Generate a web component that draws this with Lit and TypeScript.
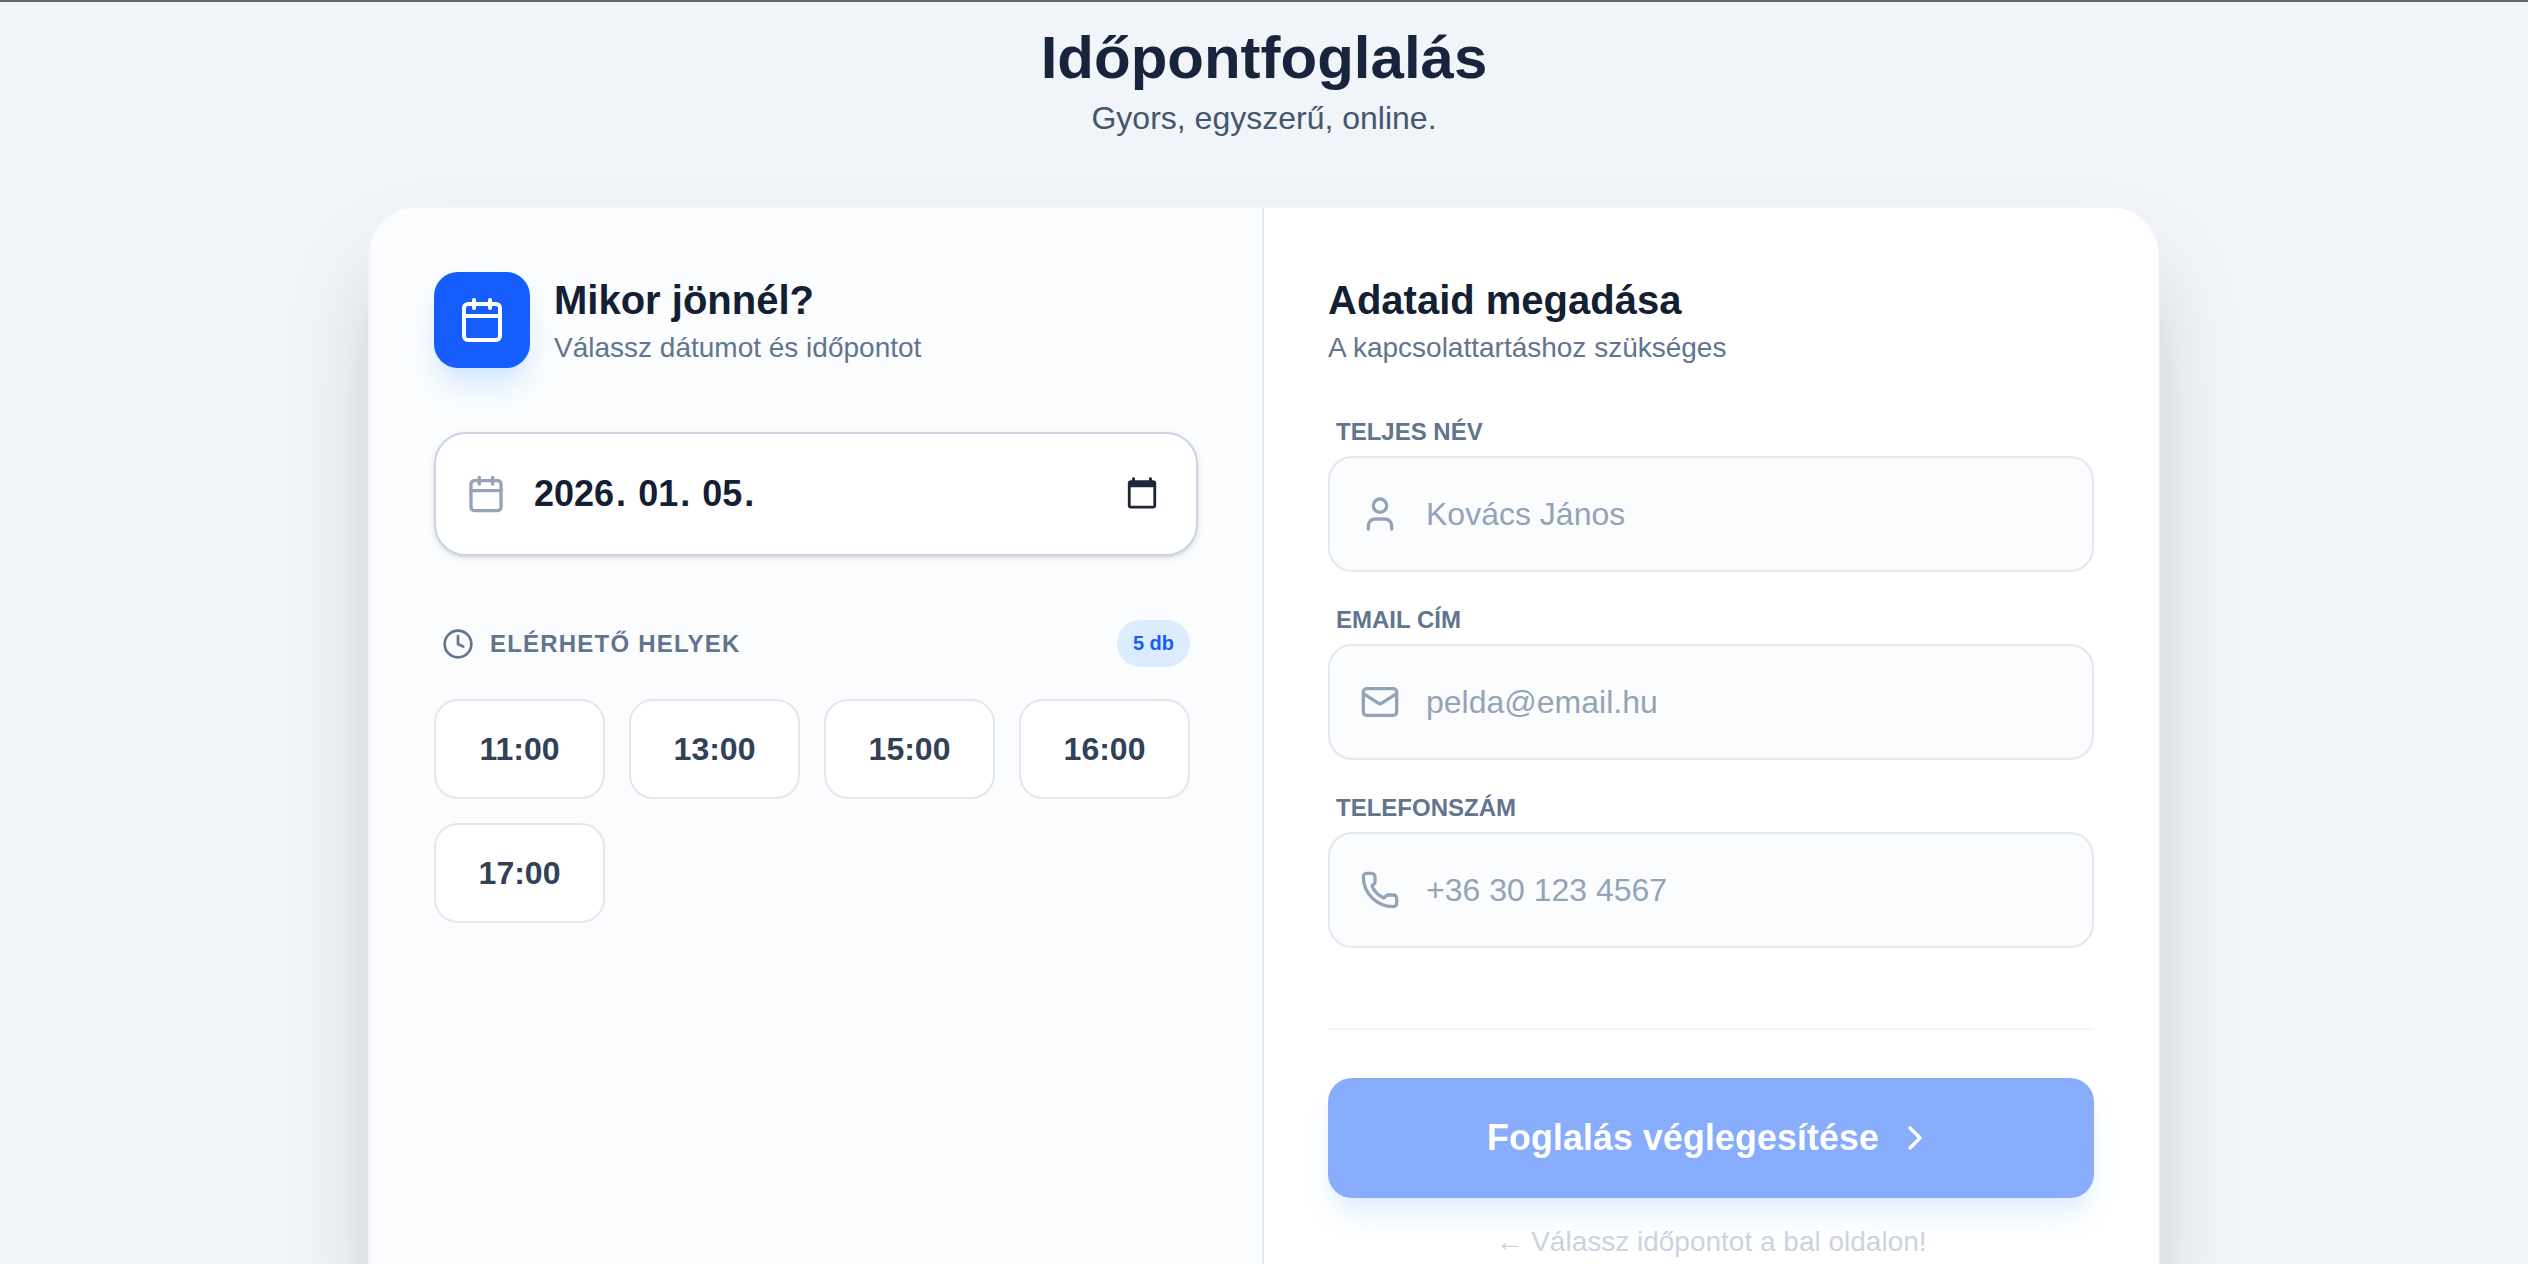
import { LitElement, html, css, svg } from "lit";
import { customElement, property, state } from "lit/decorators.js";

const ICONS: Record<string, unknown> = {
  calendar: svg`<path d="M8 2v4"/><path d="M16 2v4"/><rect width="18" height="18" x="3" y="4" rx="2"/><path d="M3 10h18"/>`,
  clock: svg`<circle cx="12" cy="12" r="10"/><path d="M12 6v6l4 2"/>`,
  user: svg`<path d="M19 21v-2a4 4 0 0 0-4-4H9a4 4 0 0 0-4 4v2"/><circle cx="12" cy="7" r="4"/>`,
  mail: svg`<path d="m22 7-8.991 5.727a2 2 0 0 1-2.009 0L2 7"/><rect x="2" y="4" width="20" height="16" rx="2"/>`,
  phone: svg`<path d="M13.832 16.568a1 1 0 0 0 1.213-.303l.355-.465A2 2 0 0 1 17 15h3a2 2 0 0 1 2 2v3a2 2 0 0 1-2 2A18 18 0 0 1 2 4a2 2 0 0 1 2-2h3a2 2 0 0 1 2 2v3a2 2 0 0 1-.8 1.6l-.468.351a1 1 0 0 0-.292 1.233 14 14 0 0 0 6.392 6.384"/>`,
  chevron: svg`<path d="m9 18 6-6-6-6"/>`,
};

@customElement("ui-icon")
export class UiIcon extends LitElement {
  @property() name = "calendar";

  static styles = css`
    :host {
      display: block;
      flex: none;
      width: 40px;
      height: 40px;
    }
    .icon {
      display: block;
      width: 100%;
      height: 100%;
      fill: none;
      stroke: currentColor;
      stroke-width: 2;
      stroke-linecap: round;
      stroke-linejoin: round;
    }
  `;

  render() {
    return html`<svg class="icon" viewBox="0 0 24 24" aria-hidden="true">${ICONS[this.name]}</svg>`;
  }
}

interface Field {
  id: string;
  label: string;
  icon: string;
  type: string;
  placeholder: string;
}

const FIELDS: Field[] = [
  { id: "name", label: "Teljes név", icon: "user", type: "text", placeholder: "Kovács János" },
  { id: "email", label: "Email cím", icon: "mail", type: "email", placeholder: "pelda@email.hu" },
  { id: "phone", label: "Telefonszám", icon: "phone", type: "tel", placeholder: "+36 30 123 4567" },
];

@customElement("app-root")
export class AppRoot extends LitElement {
  @state() private date = "2026-01-05";
  @state() private selected = "";
  private slots = ["11:00", "13:00", "15:00", "16:00", "17:00"];

  static styles = css`
    :host {
      display: block;
      box-sizing: border-box;
      min-height: 100vh;
      border-top: 2px solid #666666;
      background: #f1f5f9;
      color: #141f33;
      font-family: "Liberation Sans", Arial, sans-serif;
      font-size: 32px;
      line-height: 48px;
    }
    *,
    *::before {
      box-sizing: border-box;
    }
    h1,
    h2,
    p {
      margin: 0;
    }
    button,
    input {
      font: inherit;
      color: inherit;
    }
    .page {
      display: flex;
      flex-direction: column;
      align-items: center;
      gap: 64px;
      padding: 20px 32px 96px;
    }
    .masthead {
      text-align: center;
    }
    .page-title {
      color: #18243b;
      font-size: 60px;
      line-height: 72px;
    }
    .tagline {
      color: #45556c;
    }
    .card {
      display: grid;
      grid-template-columns: 1fr 1fr;
      width: 100%;
      max-width: 1792px;
      overflow: hidden;
      border: 2px solid #f1f5f9;
      border-radius: 48px;
      background: #ffffff;
      box-shadow: 0 50px 100px -24px rgb(0 0 0 / 0.25);
    }
    .panel {
      padding: 64px;
    }
    .when {
      border-right: 2px solid #e2e8f0;
      background: #fafcfe;
    }
    .head {
      display: flex;
      align-items: center;
      gap: 24px;
    }
    .tile {
      display: grid;
      place-items: center;
      width: 96px;
      height: 96px;
      border-radius: 24px;
      background: #155dfc;
      color: #ffffff;
      box-shadow: 0 20px 30px -6px #cfe5ff, 0 8px 12px -8px #cfe5ff;
    }
    .tile ui-icon {
      width: 48px;
      height: 48px;
    }
    .title {
      font-size: 40px;
      line-height: 56px;
    }
    .sub {
      color: #62748e;
      font-size: 28px;
      line-height: 40px;
    }
    .date {
      display: flex;
      align-items: center;
      margin-top: 64px;
      padding: 32px 34px 32px 30px;
      border: 2px solid #cad5e2;
      border-radius: 32px;
      background: #ffffff;
      font-size: 36px;
      font-weight: 700;
      line-height: 56px;
      box-shadow: 0 2px 6px rgb(0 0 0 / 0.1), 0 2px 4px -2px rgb(0 0 0 / 0.1);
    }
    .date ui-icon,
    .control ui-icon {
      color: #94a3b8;
    }
    .date-text {
      padding-left: 26px;
      white-space: pre;
    }
    .part {
      padding: 0 2px;
    }
    .date-input {
      flex: 1;
      min-width: 0;
      height: 56px;
      padding: 0;
      border: 0;
      outline: 0;
      background: none;
    }
    .date-input::-webkit-datetime-edit {
      visibility: hidden;
    }
    .date-input::-webkit-calendar-picker-indicator {
      filter: invert(12%) sepia(100%) hue-rotate(180deg) saturate(200%);
    }
    .slots-head {
      display: flex;
      align-items: center;
      gap: 16px;
      margin-top: 64px;
      padding: 0 8px;
      color: #62748e;
    }
    .slots-head ui-icon {
      width: 32px;
      height: 32px;
    }
    .slots-title {
      flex: 1;
      font-size: 24px;
      line-height: 32px;
      letter-spacing: 0.05em;
      text-transform: uppercase;
    }
    .badge {
      padding: 8px 16px;
      border-radius: 24px;
      background: #dbecfe;
      color: #155dfc;
      font-size: 20px;
      font-weight: 700;
      line-height: 31px;
    }
    .slots {
      display: grid;
      grid-template-columns: repeat(4, 1fr);
      gap: 24px;
      margin-top: 32px;
      padding-right: 8px;
    }
    .slot {
      padding: 24px 0;
      border: 2px solid #e2e8ee;
      border-radius: 24px;
      background: #ffffff;
      color: #314158;
      font-weight: 700;
      line-height: 48px;
      cursor: pointer;
    }
    .slot[aria-pressed="true"] {
      border-color: #155dfc;
      background: #155dfc;
      color: #ffffff;
    }
    .fields {
      display: flex;
      flex-direction: column;
      gap: 32px;
      margin-top: 48px;
    }
    .field {
      display: flex;
      flex-direction: column;
      gap: 8px;
    }
    .label {
      padding-left: 8px;
      color: #62748e;
      font-size: 24px;
      font-weight: 700;
      line-height: 32px;
      text-transform: uppercase;
    }
    .control {
      display: flex;
      align-items: center;
      gap: 26px;
      padding: 32px 30px;
      border: 2px solid #e2e8ee;
      border-radius: 24px;
      background: #fbfcfe;
    }
    .control:focus-within,
    .date:focus-within {
      border-color: #155dfc;
    }
    .input {
      flex: 1;
      min-width: 0;
      height: 48px;
      padding: 0;
      border: 0;
      outline: 0;
      background: none;
    }
    .input::placeholder {
      color: #94a3b8;
      opacity: 1;
    }
    .finish {
      margin-top: 80px;
      padding-top: 48px;
      border-top: 2px solid #f1f5f9;
    }
    .submit {
      display: flex;
      align-items: center;
      justify-content: center;
      gap: 16px;
      width: 100%;
      padding: 32px;
      border: 0;
      border-radius: 24px;
      background: #155dfc;
      color: #ffffff;
      font-size: 36px;
      font-weight: 700;
      line-height: 56px;
      box-shadow: 0 20px 30px -6px #bedbff, 0 8px 12px -8px #bedbff;
      cursor: pointer;
    }
    .submit:disabled {
      opacity: 0.5;
      cursor: not-allowed;
    }
    .hint {
      margin-top: 24px;
      color: #cad3e0;
      font-size: 28px;
      line-height: 40px;
      text-align: center;
    }
    .arrow {
      font-family: "Liberation Serif", serif;
    }
  `;

  private toggle(slot: string) {
    this.selected = this.selected === slot ? "" : slot;
  }

  private renderField(f: Field) {
    return html`
      <div class="field">
        <label class="label" for=${f.id}>${f.label}</label>
        <div class="control">
          <ui-icon name=${f.icon}></ui-icon>
          <input class="input" id=${f.id} name=${f.id} type=${f.type} placeholder=${f.placeholder} />
        </div>
      </div>
    `;
  }

  render() {
    return html`
      <main class="page">
        <header class="masthead">
          <h1 class="page-title">Időpontfoglalás</h1>
          <p class="tagline">Gyors, egyszerű, online.</p>
        </header>
        <form class="card" @submit=${(e: Event) => e.preventDefault()}>
          <section class="panel when">
            <div class="head">
              <span class="tile"><ui-icon name="calendar"></ui-icon></span>
              <div>
                <h2 class="title">Mikor jönnél?</h2>
                <p class="sub">Válassz dátumot és időpontot</p>
              </div>
            </div>
            <label class="date" for="date">
              <ui-icon name="calendar"></ui-icon>
              <span class="date-text">${this.date
                .split("-")
                .map((p, i) => html`${i ? " " : ""}<span class="part">${p}</span>.`)}</span>
              <input
                class="date-input"
                id="date"
                type="date"
                required
                .value=${this.date}
                @change=${(e: Event) => (this.date = (e.target as HTMLInputElement).value)}
              />
            </label>
            <div class="slots-head">
              <ui-icon name="clock"></ui-icon>
              <h2 class="slots-title">Elérhető helyek</h2>
              <span class="badge">${this.slots.length} db</span>
            </div>
            <div class="slots">
              ${this.slots.map(
                (s) => html`<button
                  class="slot"
                  type="button"
                  aria-pressed=${this.selected === s ? "true" : "false"}
                  @click=${() => this.toggle(s)}
                >${s}</button>`
              )}
            </div>
          </section>
          <section class="panel">
            <h2 class="title">Adataid megadása</h2>
            <p class="sub">A kapcsolattartáshoz szükséges</p>
            <div class="fields">${FIELDS.map((f) => this.renderField(f))}</div>
            <div class="finish">
              <button class="submit" type="submit" ?disabled=${!this.selected}>
                Foglalás véglegesítése
                <ui-icon name="chevron"></ui-icon>
              </button>
              ${this.selected
                ? ""
                : html`<p class="hint"><span class="arrow">←</span> Válassz időpontot a bal oldalon!</p>`}
            </div>
          </section>
        </form>
      </main>
    `;
  }
}
